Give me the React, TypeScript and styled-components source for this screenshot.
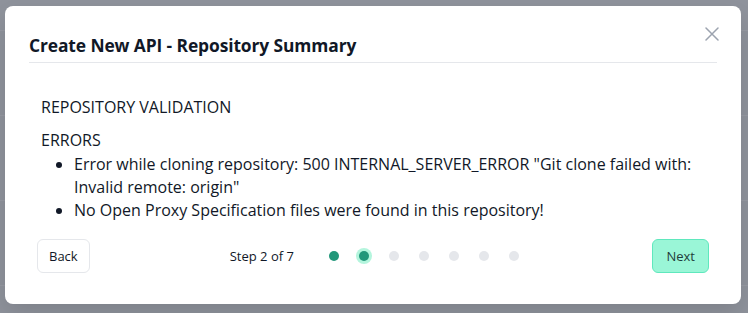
import React from "react";
import styled, { createGlobalStyle } from "styled-components";

const GlobalStyle = createGlobalStyle`
  html, body { margin: 0; padding: 0; }
  body { font-family: "Open Sans", "Noto Sans", sans-serif; color: #111827; }
  * { box-sizing: border-box; }
`;

const Backdrop = styled.div`
  position: relative;
  width: 748px;
  height: 313px;
  padding: 6px 7px 9px 5px;
  background: #8f939c;
  overflow: hidden;
`;

const PageLine = styled.div<{ $top: number }>`
  position: absolute;
  left: 0;
  right: 0;
  top: ${(p) => p.$top}px;
  height: 1px;
  background: #979aa3;
`;

const Modal = styled.div`
  position: relative;
  height: 100%;
  background: #ffffff;
  border-radius: 8px;
  display: flex;
  flex-direction: column;
  box-shadow: 0 10px 25px rgba(0, 0, 0, 0.12);
`;

const Header = styled.div`
  margin: 0 24px;
  padding: 26px 0 3px;
  border-bottom: 1px solid #e5e7eb;
`;

const Title = styled.h2`
  margin: 0;
  font-size: 17.4px;
  line-height: 27px;
  font-weight: 700;
  color: #111827;
  letter-spacing: -0.1px;
`;

const Close = styled.button`
  position: absolute;
  top: 20px;
  right: 21px;
  width: 16px;
  height: 16px;
  padding: 0;
  border: 0;
  background: none;
  display: flex;
  align-items: center;
  justify-content: center;
`;

const Body = styled.div`
  padding: 32px 36px 0;
  font-size: 16px;
  line-height: 24px;
  color: #111827;
`;

const Section = styled.div<{ $gap?: number }>`
  margin-top: ${(p) => p.$gap ?? 0}px;
`;

const List = styled.ul`
  margin: 1px 0 0;
  padding-left: 33px;
  list-style: disc;
`;

const Item = styled.li`
  line-height: 23px;
  padding-left: 0;
`;

const Footer = styled.div`
  margin-top: auto;
  padding: 0 32px 31px;
  display: flex;
  align-items: center;
  justify-content: space-between;
`;

const Button = styled.button<{ $primary?: boolean }>`
  height: 34px;
  padding: 0 ${(p) => (p.$primary ? 13 : 11)}px;
  border-radius: 6px;
  font-family: inherit;
  font-size: 13px;
  color: ${(p) => (p.$primary ? "#1f3d3b" : "#111827")};
  background: ${(p) => (p.$primary ? "#9af6d7" : "#ffffff")};
  border: 1px solid ${(p) => (p.$primary ? "#5fe8bd" : "#e5e7eb")};
`;

const Stepper = styled.div`
  display: flex;
  align-items: center;
  margin-left: 140px;
`;

const StepLabel = styled.span`
  font-size: 13px;
  color: #111827;
  margin-right: 35px;
`;

const Dots = styled.div`
  display: flex;
  align-items: center;
  gap: 20px;
`;

const Dot = styled.span<{ $state: "done" | "active" | "todo" }>`
  width: 10px;
  height: 10px;
  border-radius: 50%;
  background: ${(p) => (p.$state === "todo" ? "#e5e7eb" : "#22977a")};
  box-shadow: ${(p) => (p.$state === "active" ? "0 0 0 3px #b4f5dd" : "none")};
`;

const Spacer = styled.div`
  flex: 1;
`;

export default function App() {
  const steps = 7;
  const current = 2;
  return (
    <>
      <GlobalStyle />
      <Backdrop>
        <PageLine $top={30} />
        <PageLine $top={115} />
        <PageLine $top={200} />
        <PageLine $top={285} />
        <Modal>
          <Header>
            <Title>Create New API - Repository Summary</Title>
          </Header>
          <Close aria-label="Close">
            <svg width="14" height="14" viewBox="0 0 14 14" fill="none">
              <path d="M1 1L13 13M13 1L1 13" stroke="#9ca3af" strokeWidth="1.5" strokeLinecap="round" />
            </svg>
          </Close>
          <Body>
            <Section>REPOSITORY VALIDATION</Section>
            <Section $gap={9}>ERRORS</Section>
            <List>
              <Item>
                Error while cloning repository: 500 INTERNAL_SERVER_ERROR "Git clone failed with: Invalid remote: origin"
              </Item>
              <Item>No Open Proxy Specification files were found in this repository!</Item>
            </List>
          </Body>
          <Footer>
            <Button>Back</Button>
            <Stepper>
              <StepLabel>
                Step {current} of {steps}
              </StepLabel>
              <Dots>
                {Array.from({ length: steps }, (_, i) => (
                  <Dot key={i} $state={i + 1 < current ? "done" : i + 1 === current ? "active" : "todo"} />
                ))}
              </Dots>
            </Stepper>
            <Spacer />
            <Button $primary>Next</Button>
          </Footer>
        </Modal>
      </Backdrop>
    </>
  );
}
